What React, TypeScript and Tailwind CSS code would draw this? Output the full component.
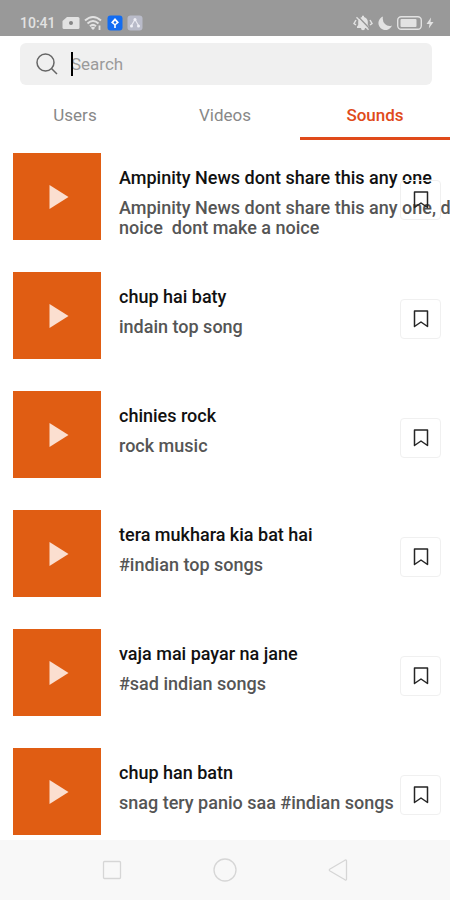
import { useState } from "react";

const tabs = ["Users", "Videos", "Sounds"];

const sounds = [
  {
    title: "Ampinity News dont share this any one",
    description: "Ampinity News dont share this any one, dont\nnoice  dont make a noice",
  },
  { title: "chup hai baty", description: "indain top song" },
  { title: "chinies rock", description: "rock music" },
  { title: "tera mukhara kia bat hai", description: "#indian top songs" },
  { title: "vaja mai payar na jane", description: "#sad indian songs" },
  { title: "chup han batn", description: "snag tery panio saa #indian songs" },
];

const StatusBar = () => (
  <div className="flex h-9 items-end justify-between bg-[#999999] pb-[3px] pl-5 pr-4 text-[#e2e2e2]">
    <div className="flex h-5 items-center gap-1">
      <span className="mr-0.5 text-sm leading-5 font-medium">10:41</span>
      <svg className="h-4 w-[18px]" viewBox="0 0 18 16">
        <path d="M5 2H16Q17.500 2 17.500 3.500V12.500Q17.500 14 16 14H2Q.5 14 .5 12.500V6Z" fill="currentColor" />
        <circle cx="9" cy="8" r="2" fill="#858585" />
      </svg>
      <svg className="h-4 w-[19px]" viewBox="0 0 19 16" fill="none" stroke="currentColor" strokeWidth="2">
        <path d="M1 5.500Q9-1.500 17 5.500M3.500 8.500Q9 3.500 14.500 8.500M6 11.300Q9 8.500 12 11.300" />
        <path d="M9 15L6.800 12.700Q9 11 11.200 12.700Z" fill="currentColor" stroke="none" />
        <path d="M15.500 10.500V15" strokeWidth="1.800" />
      </svg>
      <svg className="h-4 w-4" viewBox="0 0 16 16">
        <rect x=".5" y=".5" width="15" height="15" rx="3" fill="#126cf2" />
        <path d="M8 3L12 7.500L8.800 10V13H7.200V10L4 7.500Z" fill="#fff" />
        <path d="M8 5.800L9.600 7.400L8 9L6.400 7.400Z" fill="#126cf2" />
      </svg>
      <svg className="h-4 w-4" viewBox="0 0 16 16">
        <rect x=".5" y=".5" width="15" height="15" rx="3" fill="#b9bbc9" />
        <path d="M8 4.500L4.500 10.500M8 4.500L11.500 10.500" stroke="#e9e9f1" strokeWidth="1.200" />
        <g fill="#f0f0f6">
          <circle cx="8" cy="4.500" r="1.500" />
          <circle cx="4.500" cy="11" r="1.500" />
          <circle cx="11.500" cy="11" r="1.500" />
        </g>
      </svg>
    </div>
    <div className="flex h-5 items-center gap-1">
      <svg className="h-4 w-5" viewBox="0 0 20 16">
        <path d="M4 13V11.500L5.200 10V6.500Q5.500 3 9 2V.8H11V2Q14.500 3 14.800 6.500V10L16 11.500V13H12Q12 15.200 10 15.200Q8 15.200 8 13Z" fill="currentColor" />
        <path d="M3 5L1 8.500L3 10M17 5L19 8.500L17 10" stroke="currentColor" strokeWidth="1.500" fill="none" />
        <path d="M4.500 1L17 14" stroke="#999999" strokeWidth="1.600" />
        <path d="M3.500 2.300L15.500 14.800" stroke="currentColor" strokeWidth="1.300" />
      </svg>
      <svg className="h-4 w-4" viewBox="0 0 16 16">
        <path d="M6 1.500A7 7 0 1 0 15 10.500Q11 12 8 9Q5 6 6 1.500Z" fill="currentColor" />
      </svg>
      <svg className="h-4 w-[25px]" viewBox="0 0 25 16">
        <rect x=".7" y="1.700" width="23.600" height="12.600" rx="3.500" fill="none" stroke="currentColor" strokeWidth="1.400" />
        <rect x="3.500" y="4" width="16" height="8" rx="1" fill="currentColor" />
      </svg>
      <svg className="h-4 w-2" viewBox="0 0 8 16">
        <path d="M5 2.500L.5 9H3.500L2.800 13.500L7.500 7H4.500Z" fill="currentColor" />
      </svg>
    </div>
  </div>
);

const SoundRow = ({ title, description }: { title: string; description: string }) => (
  <li className="relative flex gap-[18px] overflow-hidden pl-[13px]">
    <button aria-label={`Play ${title}`} className="flex h-[87px] w-[88px] shrink-0 items-center justify-center bg-[#e05d13]">
      <svg className="ml-1 h-6 w-5" viewBox="0 0 20 24">
        <path d="M.5 0L19.500 12L.5 24Z" fill="#fbdfd0" />
      </svg>
    </button>
    <div className="flex min-w-0 flex-1 flex-col gap-[10px] pt-[15px] text-lg leading-5 font-medium whitespace-pre">
      <h2 className="text-[#111111]">{title}</h2>
      <p className="text-[#555555]">{description}</p>
    </div>
    {/* long titles run underneath the bookmark */}
    <button
      aria-label={`Save ${title}`}
      className="absolute top-[27px] right-[9px] flex h-10 w-[41px] items-center justify-center rounded border border-[#f0f0f0]"
    >
      <svg className="h-[18px] w-4" viewBox="0 0 16 18">
        <path d="M1.500 1H14.500V16.500L8 12L1.500 16.500Z" fill="none" stroke="#252525" strokeWidth="1.500" strokeLinejoin="round" />
      </svg>
    </button>
  </li>
);

const SystemNav = () => (
  <nav className="flex h-[60px] items-center justify-center gap-[89px] bg-[#f8f8f8] text-[#d6d6d6]">
    <button aria-label="Recent apps">
      <svg className="h-6 w-6" viewBox="0 0 24 24" fill="none" stroke="currentColor" strokeWidth="1.300">
        <rect x="3.500" y="3.500" width="17" height="17" rx="1" />
      </svg>
    </button>
    <button aria-label="Home">
      <svg className="h-6 w-6" viewBox="0 0 24 24" fill="none" stroke="currentColor" strokeWidth="1.300">
        <circle cx="12" cy="12" r="11" />
      </svg>
    </button>
    <button aria-label="Back">
      <svg className="h-6 w-6" viewBox="0 0 24 24" fill="none" stroke="currentColor" strokeWidth="1.300" strokeLinejoin="round">
        <path d="M20.500 3Q20.500 1.500 19 2.200L4 11Q2.500 12 4 13L19 21.800Q20.500 22.500 20.500 21Z" />
      </svg>
    </button>
  </nav>
);

export default function App() {
  const [activeTab, setActiveTab] = useState("Sounds");
  const [query, setQuery] = useState("");

  return (
    <div className="flex min-h-screen flex-col bg-white font-[Roboto,sans-serif]">
      <StatusBar />

      <div className="mt-[7px] mr-[18px] ml-5 flex h-[42px] items-center rounded-md bg-[#f0f0f0] pl-4">
        <svg className="h-[22px] w-[22px] shrink-0" viewBox="0 0 22 22" fill="none" stroke="#666666" strokeWidth="1.500">
          <circle cx="9.500" cy="9.500" r="8.500" />
          <path d="M15.500 15.500L21 21" />
        </svg>
        <div className="relative ml-[13px] flex-1">
          <input
            type="text"
            aria-label="Search"
            placeholder="Search"
            value={query}
            onChange={(e) => setQuery(e.target.value)}
            className="block h-6 w-full bg-transparent text-[17px] leading-6 text-black outline-none placeholder:text-[#9b9b9b]"
          />
          {!query && <span className="pointer-events-none absolute top-0 left-0 h-6 w-0.5 bg-black" />}
        </div>
      </div>

      <div role="tablist" className="mt-2 grid h-[47px] grid-cols-3">
        {tabs.map((tab) => (
          <button
            key={tab}
            role="tab"
            aria-selected={tab === activeTab}
            onClick={() => setActiveTab(tab)}
            className={`border-b-[3px] text-[17px] leading-5 ${
              tab === activeTab ? "border-[#e04a1a] font-medium text-[#e04a1a]" : "border-transparent text-[#888888]"
            }`}
          >
            {tab}
          </button>
        ))}
      </div>

      <ul className="flex flex-1 flex-col gap-8 pt-[13px] pb-[5px]">
        {sounds.map((sound) => (
          <SoundRow key={sound.title} {...sound} />
        ))}
      </ul>

      <SystemNav />
    </div>
  );
}
